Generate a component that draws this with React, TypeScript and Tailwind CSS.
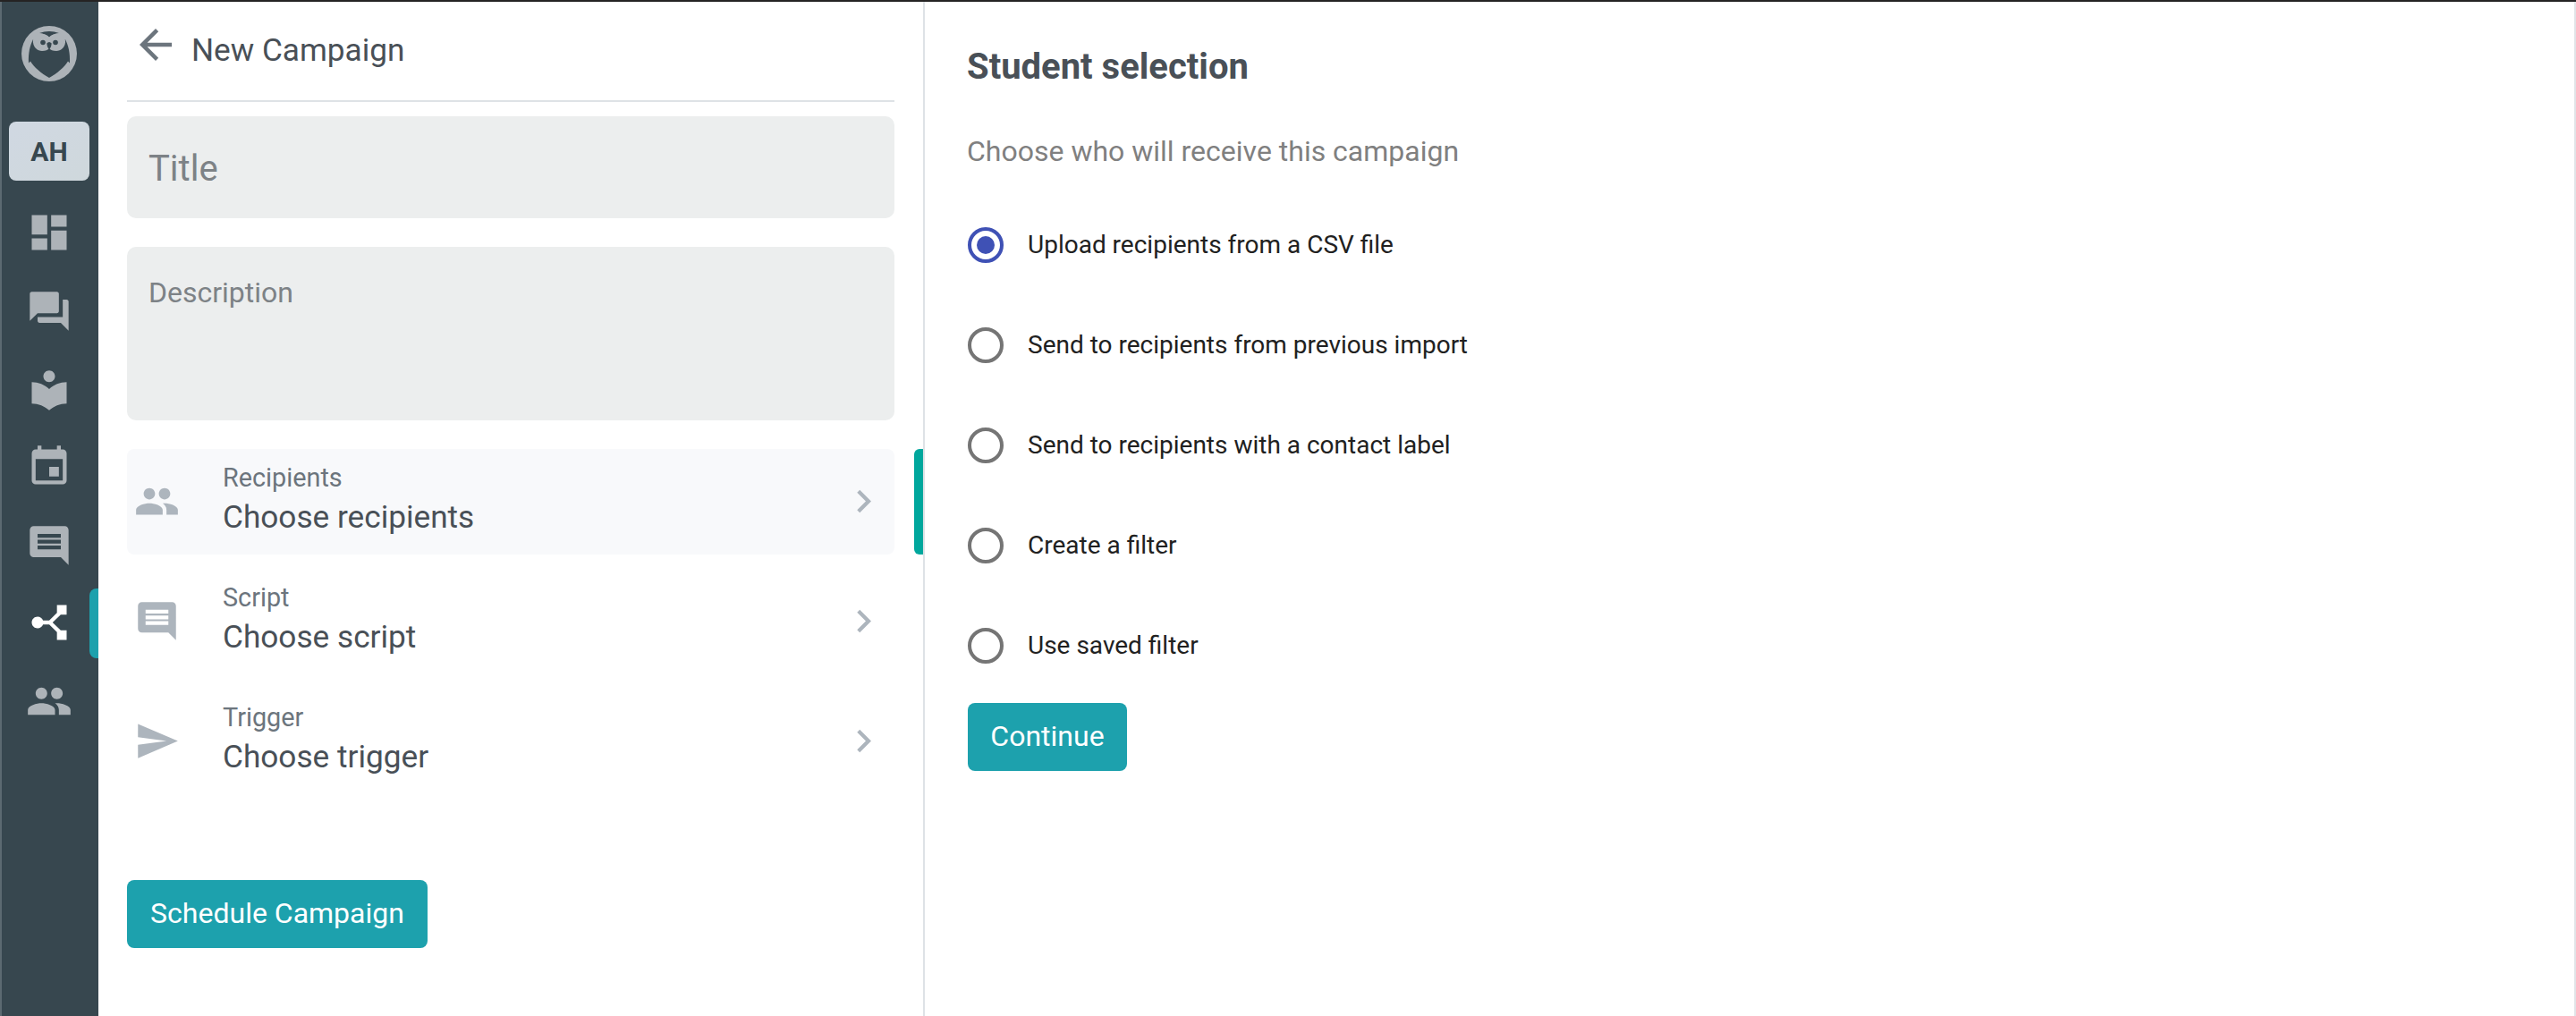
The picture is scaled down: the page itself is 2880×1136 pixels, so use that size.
import { useState } from "react";
import type { IconType } from "react-icons";
import {
	MdArrowBack,
	MdChevronRight,
	MdComment,
	MdDashboard,
	MdDeviceHub,
	MdEvent,
	MdForum,
	MdLocalLibrary,
	MdPeople,
	MdSend,
} from "react-icons/md";

type NavItem = { label: string; icon: IconType; className: string };

const navItems: NavItem[] = [
	{ label: "Dashboard", icon: MdDashboard, className: "mt-8 text-[#adb3b8]" },
	{ label: "Conversations", icon: MdForum, className: "mt-9 text-[#adb3b8]" },
	{ label: "Library", icon: MdLocalLibrary, className: "mt-9 text-[#adb3b8]" },
	{ label: "Events", icon: MdEvent, className: "mt-[34px] text-[#adb3b8]" },
	{ label: "Scripts", icon: MdComment, className: "mt-9 text-[#adb3b8]" },
	{ label: "Campaigns", icon: MdDeviceHub, className: "mt-[34px] -rotate-90 text-white" },
	{ label: "Contacts", icon: MdPeople, className: "mt-9 text-[#adb3b8]" },
];

const steps = [
	{ name: "Recipients", action: "Choose recipients", icon: MdPeople },
	{ name: "Script", action: "Choose script", icon: MdComment },
	{ name: "Trigger", action: "Choose trigger", icon: MdSend },
];

const options = [
	"Upload recipients from a CSV file",
	"Send to recipients from previous import",
	"Send to recipients with a contact label",
	"Create a filter",
	"Use saved filter",
];

function OwlLogo() {
	return (
		<svg viewBox="0 0 62 62" className="mt-[27px] size-[62px] shrink-0">
			<circle cx="31" cy="31" r="31" fill="#adb3b8" />
			<path
				d="M13 15C9.5 22 7.5 30 8 41.5L10 39.5C14 46 22 53 31 58C40 53 48 46 52 39.5L54 41.5C54.5 30 52.5 22 49 15Z"
				fill="#37474f"
			/>
			<path d="M20 8Q31 4 42 8Q35 8.5 31 12.5Q27 8.5 20 8Z" fill="#37474f" />
			<path
				d="M31 13C28 9.5 24 8.5 19 8.5C14.5 11 12.5 14 13 18.500C13.5 24 18 28 23 28C27 28 29.5 26.5 31 25.5C32.5 26.5 35 28 39 28C44 28 48.5 24 49 18.5C49.5 14 47.5 11 43 8.5C38 8.5 34 9.5 31 13Z"
				fill="#adb3b8"
			/>
			<circle cx="24" cy="18.5" r="2.8" fill="#37474f" />
			<circle cx="38" cy="18.5" r="2.8" fill="#37474f" />
			<path d="M28.3 19.5Q31 16.5 33.7 19.5Q33.7 23 31 27Q28.3 23 28.3 19.5Z" fill="#37474f" />
		</svg>
	);
}

function Sidebar() {
	return (
		<nav className="relative flex w-[110px] shrink-0 flex-col items-center border-l-2 border-[#5c6a71] bg-[#37474f] pr-[2px]">
			<OwlLogo />
			<div className="mt-[45px] flex h-[66px] w-[90px] shrink-0 items-center justify-center rounded-lg bg-linear-to-br from-[#d0d8e2] to-[#cfd8dc] text-[30px] font-bold text-[#37474f]">
				AH
			</div>
			{navItems.map(({ label, icon: Icon, className }) => (
				<Icon key={label} aria-label={label} className={`size-[52px] shrink-0 ${className}`} />
			))}
			<span className="absolute top-[656px] right-0 h-[78px] w-[10px] rounded-l-lg bg-[#1da1ad]" />
		</nav>
	);
}

function CampaignForm() {
	const [active, setActive] = useState("Recipients");

	return (
		<section className="w-[924px] shrink-0 border-r-2 border-[#dee2e6] pl-8">
			<header className="flex h-28 w-[858px] border-b-2 border-[#dee2e6] pl-[5px]">
				<MdArrowBack className="mt-[21px] size-[54px] text-[#6c757d]" />
				<h1 className="mt-8 ml-[13px] text-[35.2px] leading-[44px] text-[#495057]">New Campaign</h1>
			</header>
			<input
				placeholder="Title"
				className="mt-4 block h-[114px] w-[858px] rounded-[10px] bg-[#eceeee] px-6 pt-[2px] text-[40px] placeholder:text-[#7d8286]"
			/>
			<textarea
				placeholder="Description"
				className="mt-8 block h-[194px] w-[858px] resize-none rounded-[10px] bg-[#eceeee] px-6 pt-[27px] text-[32px] leading-[48px] placeholder:text-[#7d8286]"
			/>
			<div className="mt-8 flex flex-col gap-4">
				{steps.map(({ name, action, icon: Icon }) => (
					<div key={name} className="flex h-[118px] justify-between">
						<button
							onClick={() => setActive(name)}
							className={`flex w-[858px] items-center rounded-lg pr-[9px] pb-px pl-2 text-left ${active === name ? "bg-[#f8f9fb]" : ""}`}
						>
							<Icon className="size-[51px] text-[#adb5bd]" />
							<span className="ml-12 flex grow flex-col pb-[9px]">
								<span className="text-[28.8px] leading-[44px] text-[#6c757d]">{name}</span>
								<span className="text-[35.2px] leading-[44px] text-[#495057]">{action}</span>
							</span>
							<MdChevronRight className="size-[51px] text-[#adb5bd]" />
						</button>
						{active === name && <span className="w-[10px] rounded-l-md bg-[#00a79d]" />}
					</div>
				))}
			</div>
			<button className="mt-24 flex h-[76px] w-[336px] items-center justify-center rounded-lg bg-[#1da1ad] pb-[2px] text-[32px] text-white">
				Schedule Campaign
			</button>
		</section>
	);
}

function StudentSelection() {
	const [selected, setSelected] = useState(options[0]);

	return (
		<section className="grow border-r-2 border-[#e1e4e8] pl-12">
			<h2 className="mt-[49px] -ml-px text-[40px] leading-[48px] font-bold text-[#495057]">Student selection</h2>
			<p className="mt-[46px] -ml-px text-[32px] leading-[48px] text-[#808080]">
				Choose who will receive this campaign
			</p>
			<div className="mt-[61px] flex flex-col gap-[72px]">
				{options.map((option) => (
					<label key={option} className="flex h-10 items-center text-[28px] text-[#212121]">
						<input
							type="radio"
							name="audience"
							className="sr-only"
							checked={selected === option}
							onChange={() => setSelected(option)}
						/>
						<span
							className={`mr-[27px] flex size-10 items-center justify-center rounded-full border-4 ${selected === option ? "border-[#3f51b5]" : "border-[#757575]"}`}
						>
							{selected === option && <span className="size-5 rounded-full bg-[#3f51b5]" />}
						</span>
						{option}
					</label>
				))}
			</div>
			<button className="mt-11 flex h-[76px] w-[178px] items-center justify-center rounded-lg bg-[#1da1ad] pb-[2px] text-[32px] text-white">
				Continue
			</button>
		</section>
	);
}

export default function App() {
	return (
		<div className="flex h-[1136px] w-[2880px] flex-col overflow-hidden bg-white font-['Roboto',sans-serif]">
			<div className="h-[2px] shrink-0 bg-[#252323]" />
			<main className="flex min-h-0 grow">
				<Sidebar />
				<CampaignForm />
				<StudentSelection />
			</main>
		</div>
	);
}
